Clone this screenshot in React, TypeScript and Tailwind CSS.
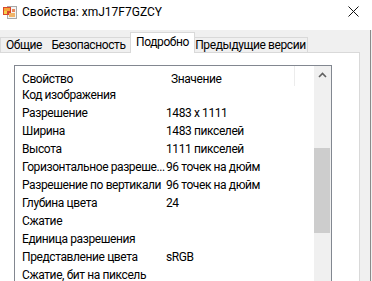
import React from "react";

const rows: [string, string][] = [
  ["Код изображения", ""],
  ["Разрешение", "1483 x 1111"],
  ["Ширина", "1483 пикселей"],
  ["Высота", "1111 пикселей"],
  ["Горизонтальное разреше...", "96 точек на дюйм"],
  ["Разрешение по вертикали", "96 точек на дюйм"],
  ["Глубина цвета", "24"],
  ["Сжатие", ""],
  ["Единица разрешения", ""],
  ["Представление цвета", "sRGB"],
  ["Сжатие, бит на пиксель", ""],
];

function FileIcon() {
  return (
    <svg width="16" height="16" viewBox="0 0 16 16">
      <rect x="5.5" y="2.5" width="9" height="12" fill="#f4f4f4" stroke="#a8a8a8" />
      <rect x="1" y="3" width="8" height="8" fill="#d9472b" />
      <rect x="2" y="4" width="6" height="3" fill="#f7a33a" />
      <rect x="2" y="7" width="3" height="3" fill="#f5d04c" />
      <rect x="7" y="9" width="6" height="4" fill="#f0b46a" />
      <rect x="10" y="5" width="3" height="3" fill="#e8845a" />
    </svg>
  );
}

export default function App() {
  return (
    <div
      className="relative flex h-[281px] w-[372px] flex-col overflow-hidden bg-[#f0f0f0] text-[12px] text-black"
      style={{ fontFamily: "Roboto, 'Noto Sans', sans-serif" }}
    >
      {/* Title bar */}
      <div className="flex h-[30px] shrink-0 items-start bg-white">
        <div className="ml-[2px] mt-[4px]">
          <FileIcon />
        </div>
        <div className="ml-[4px] whitespace-nowrap pt-[4px] leading-[16px]">Свойства: xmJ17F7GZCY</div>
        <div className="ml-auto mr-[13px] mt-[6px]">
          <svg width="11" height="11" viewBox="0 0 11 11">
            <path d="M0.5 0.5 L10.5 10.5 M10.5 0.5 L0.5 10.5" stroke="#111" strokeWidth="1" />
          </svg>
        </div>
      </div>

      {/* Body */}
      <div className="flex flex-1 flex-col pr-[12px] pt-[2px] tracking-[-0.4px]">
        {/* Tabs */}
        <div className="flex items-end whitespace-nowrap">
          <div className="flex h-[15px] w-[48px] items-center justify-center border-l border-r border-t border-[#d9d9d9] bg-[#f0f0f0] leading-[14px]">
            Общие
          </div>
          <div className="-ml-px flex h-[15px] w-[86px] items-center justify-center border-r border-t border-[#d9d9d9] bg-[#f0f0f0] pr-[2px] leading-[14px]">
            Безопасность
          </div>
          <div className="relative z-10 -mb-px -ml-[3px] flex h-[21px] w-[65px] items-start justify-center border-l border-r border-t border-[#d9d9d9] bg-white pt-[2px] leading-[14px]">
            Подробно
          </div>
          <div className="-ml-px flex h-[15px] w-[114px] items-center justify-center border-r border-t border-[#d9d9d9] bg-[#f0f0f0] leading-[14px]">
            Предыдущие версии
          </div>
        </div>

        {/* Panel */}
        <div className="flex flex-1 flex-col border-r border-t border-[#d9d9d9] bg-white pl-[14px] pt-[12px]">
          <div className="flex w-[318px] flex-1 border-l border-r border-t border-[#828790] bg-white">
            {/* list */}
            <div className="flex flex-1 flex-col">
              <div className="relative flex h-[20px] pt-[6px] leading-[14px]">
                <div className="w-[151px] pl-[7px]">Свойство</div>
                <div className="pl-[5px]">Значение</div>
                <div className="absolute left-[279px] top-0 h-[20px] w-px bg-[#ececec]" />
              </div>
              {rows.map(([k, v], i) => (
                <div key={i} className="flex h-[18px] shrink-0 leading-[18px]">
                  <div className="w-[151px] shrink-0 whitespace-nowrap pl-[7px]">{k}</div>
                  <div className="whitespace-nowrap">{v}</div>
                </div>
              ))}
            </div>
            {/* scrollbar */}
            <div className="flex w-[17px] shrink-0 flex-col bg-[#f0f0f0]">
              <div className="flex h-[17px] items-center justify-center pt-[1px]">
                <svg width="9" height="6" viewBox="0 0 9 6">
                  <path d="M1 5 L4.5 1.5 L8 5" fill="none" stroke="#606060" strokeWidth="1.6" />
                </svg>
              </div>
              <div className="ml-0 mr-px mt-[65px] h-[85px] bg-[#cdcdcd]" />
            </div>
          </div>
        </div>
      </div>
      <div className="absolute right-[1px] top-[30px] bottom-0 w-px bg-[#8a8a8a]" />
    </div>
  );
}
